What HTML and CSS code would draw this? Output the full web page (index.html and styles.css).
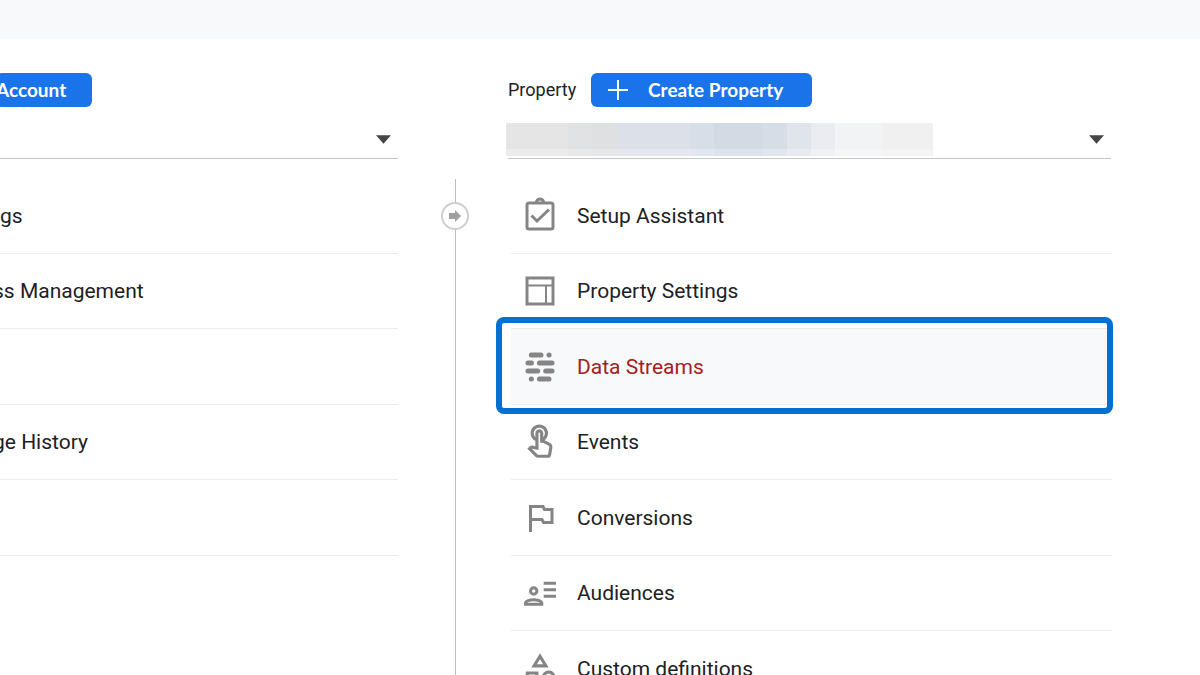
FILE: index.html
```html
<!DOCTYPE html>
<html lang="en">
<head>
<meta charset="utf-8">
<title>Admin</title>
<link rel="stylesheet" href="styles.css">
</head>
<body>
<header class="topbar"></header>
<main class="admin">
  <section class="column account" aria-label="Account">
    <div class="column-head">
      <button class="create create-account" type="button">Account</button>
    </div>
    <div class="picker">
      <select class="picker-select" aria-label="Select account"><option></option></select>
      <svg class="caret" viewBox="0 0 14 8" aria-hidden="true"><path d="M0 0h14L7 8z"/></svg>
    </div>
    <ul class="menu">
      <li class="row"><a class="link" href="#">gs</a></li>
      <li class="row"><a class="link clipped" href="#">ss Management</a></li>
      <li class="row"></li>
      <li class="row"><a class="link clipped" href="#">ge History</a></li>
      <li class="row"></li>
    </ul>
  </section>

  <div class="divider">
    <button class="move" type="button" aria-label="Move column">
      <svg class="move-icon" viewBox="0 0 14 12" aria-hidden="true"><path d="M1 3h6V0l6 6-6 6V9H1z"/></svg>
    </button>
  </div>

  <section class="column property" aria-label="Property">
    <div class="column-head">
      <span class="head-label">Property</span>
      <button class="create" type="button">
        <svg class="plus" viewBox="0 0 20 20" aria-hidden="true"><path d="M10 0v20M0 10h20"/></svg>
        <span class="create-label">Create Property</span>
      </button>
    </div>
    <div class="picker">
      <select class="picker-select" aria-label="Select property"><option></option></select>
      <span class="mask"></span>
      <svg class="caret" viewBox="0 0 14 8" aria-hidden="true"><path d="M0 0h14L7 8z"/></svg>
    </div>
    <ul class="menu">
      <li class="row"><a class="link" href="#">
        <svg class="icon line" viewBox="0 0 38 38" aria-hidden="true"><rect x="6" y="6" width="26" height="26" rx="2"/><path d="M15.500 5a3.500 3 0 0 1 7 0"/><path d="M10.500 18.500l5.500 5.500L28 12.500"/></svg>
        Setup Assistant</a></li>
      <li class="row"><a class="link" href="#">
        <svg class="icon line" viewBox="0 0 38 38" aria-hidden="true"><rect x="6" y="6" width="26" height="26"/><path class="thin" d="M6 13.500h26M25 13.500V32"/></svg>
        Property Settings</a></li>
      <li class="row selected"><a class="link" href="#">
        <svg class="icon dashes" viewBox="0 0 38 38" aria-hidden="true"><path d="M10.300 7h9.700M28 7h.1M7 15h3.400M18.400 15H31M7 23h9.700M24.700 23H31M10.300 31h.1M18.400 31H28"/></svg>
        Data Streams</a></li>
      <li class="row"><a class="link" href="#">
        <svg class="icon" viewBox="0 0 24 24" aria-hidden="true"><path d="M18.190 12.440l-3.240-1.620c1.290-1 2.120-2.560 2.120-4.320 0-3.030-2.470-5.500-5.500-5.500s-5.500 2.470-5.500 5.500c0 2.130 1.220 3.980 3 4.890v3.260c-2.150-.46-2.020-.44-2.260-.44-.53 0-1.030.21-1.410.59L4 16.220l5.090 5.090c.43.440 1.030.69 1.650.69h6.300c.98 0 1.810-.7 1.970-1.670l.8-4.710c.22-1.300-.43-2.580-1.620-3.180zM17.840 15.290L17.040 20h-6.300c-.09 0-.17-.04-.24-.1l-3.680-3.680 4.250.89V6.500c0-.28.22-.5.5-.5s.5.22.5.5v6h1.760l3.460 1.730c.4.200.62.630.55 1.060zM8.070 6.500c0-1.930 1.570-3.500 3.500-3.500s3.500 1.570 3.500 3.500c0 .95-.38 1.810-1 2.440V6.500c0-1.380-1.120-2.500-2.500-2.500s-2.500 1.120-2.500 2.500v2.440c-.62-.63-1-1.490-1-2.440z"/></svg>
        Events</a></li>
      <li class="row"><a class="link" href="#">
        <svg class="icon line" viewBox="0 0 38 38" aria-hidden="true"><path d="M9.500 33V7.500h12.500l1.500 3H31v13h-8.500l-1.500-3H9.500"/></svg>
        Conversions</a></li>
      <li class="row"><a class="link" href="#">
        <svg class="icon line" viewBox="0 0 38 38" aria-hidden="true"><circle cx="12.700" cy="17" r="3.200"/><path d="M4.500 30.300h16.300v-1.300c0-2-4.500-3.300-8.150-3.300s-8.150 1.300-8.150 3.300z"/><path d="M22.700 9.300H35M22.700 15.700H35M22.700 22.300H35"/></svg>
        Audiences</a></li>
      <li class="row"><a class="link" href="#">
        <svg class="icon" viewBox="0 0 24 24" aria-hidden="true"><path d="M12 2l-5.500 9h11L12 2zm0 3.840L13.930 9h-3.870L12 5.840zM17.500 13c-2.490 0-4.500 2.010-4.500 4.500s2.010 4.500 4.500 4.500 4.500-2.010 4.500-4.500-2.010-4.500-4.500-4.500zm0 7c-1.380 0-2.500-1.120-2.500-2.500s1.120-2.500 2.500-2.500 2.500 1.120 2.500 2.500-1.120 2.500-2.500 2.500zM3 21.500h8v-8H3v8zm2-6h4v4H5v-4z"/></svg>
        Custom definitions</a></li>
    </ul>
  </section>
</main>
</body>
</html>
```
FILE: styles.css
```css
* { box-sizing: border-box; }

body {
  margin: 0;
  height: 100vh;
  overflow: hidden;
  display: flex;
  flex-direction: column;
  background: #fff;
  color: #202124;
  font-family: Roboto, "Liberation Sans", sans-serif;
  font-size: 21px;
}

.topbar {
  flex: none;
  height: 39px;
  background: #f8f9fb;
}

.admin {
  flex: 1;
  min-height: 0;
  display: grid;
  grid-template-columns: minmax(0, 398fr) 110px minmax(0, 604fr);
  padding: 34px 88px 0 0;
}

.column-head {
  display: flex;
  align-items: center;
  gap: 15px;
  height: 34px;
}

.head-label {
  padding-bottom: 2px;
  font-size: 18px;
}

.create {
  display: flex;
  align-items: center;
  gap: 17px;
  height: 34px;
  padding: 0 26px 0 17px;
  border: 0;
  border-radius: 6px;
  background: #1a73e8;
  color: #fff;
  font-family: Lato, sans-serif;
  font-size: 19px;
  font-weight: 700;
  white-space: nowrap;
}

.create-label {
  min-width: 141px;
  padding-bottom: 2px;
  text-align: center;
}

.create-account {
  margin-left: -4px;
  padding: 0 26px 2px 0;
}

.plus {
  width: 20px;
  height: 20px;
  stroke: #fff;
  stroke-width: 2;
}

.picker {
  position: relative;
  height: 36px;
  margin-top: 16px;
  margin-right: 1px;
}

.account .picker { margin-right: 0; }

.picker-select {
  display: block;
  width: 100%;
  height: 100%;
  border: 0;
  border-bottom: 1px solid #c4c4c4;
  border-radius: 0;
  background: transparent;
  appearance: none;
}

.caret {
  position: absolute;
  right: 7px;
  top: 12px;
  width: 15px;
  height: 9px;
  fill: #444746;
  pointer-events: none;
}

/* Blocky blur that hides the property name */
.mask {
  position: absolute;
  left: -2px;
  top: 0;
  width: 427px;
  height: 33px;
  background:
    linear-gradient(transparent 78%, rgba(255, 255, 255, .25) 78%),
    linear-gradient(90deg,
      #e5e5e5 0 62px, #e1e2e3 62px 86px, #dee0e2 86px 112px,
      #dce1e9 112px 184px, #d8dee8 184px 208px, #d3dae4 208px 256px,
      #d7dde7 256px 281px, #e0e5ec 281px 305px, #eaecf1 305px 329px,
      #f2f3f5 329px 376px, #f0f0f1 376px);
  pointer-events: none;
}

.menu {
  display: grid;
  grid-auto-rows: 76px 75px;
  margin: 19px 0 0;
  padding: 0;
  list-style: none;
}

.property .menu { margin-left: 3px; }

.row {
  position: relative;
  border-bottom: 1px solid #ececec;
}

.link {
  display: flex;
  align-items: center;
  gap: 18px;
  height: 100%;
  padding-left: 10px;
  color: inherit;
  text-decoration: none;
  white-space: nowrap;
}

.account .link { padding-left: 0; }

.account .clipped { margin-left: -7px; }

.selected {
  background: #f8f9fb;
  color: #a52020;
}

.selected::after {
  content: "";
  position: absolute;
  inset: -12px -1px -10px -15px;
  border: 6px solid #0070d2;
  border-radius: 8px;
  pointer-events: none;
}

.icon {
  flex: none;
  width: 38px;
  height: 38px;
  fill: #858585;
}

.line {
  fill: none;
  stroke: #858585;
  stroke-width: 3;
}

.thin { stroke-width: 2; }

.dashes {
  fill: none;
  stroke: #858585;
  stroke-width: 5;
  stroke-linecap: round;
}

.divider {
  display: flex;
  justify-content: center;
  align-items: flex-start;
  margin-top: 106px;
  margin-right: -4px;
  padding-top: 23px;
  background: linear-gradient(#bdbdbd, #bdbdbd) center / 1px 100% no-repeat;
}

.move {
  display: flex;
  align-items: center;
  justify-content: center;
  width: 28px;
  height: 28px;
  padding: 0;
  border: 2px solid #cfcfcf;
  border-radius: 50%;
  background: #fff;
}

.move-icon {
  width: 14px;
  height: 12px;
  fill: #a0a0a0;
}
```
